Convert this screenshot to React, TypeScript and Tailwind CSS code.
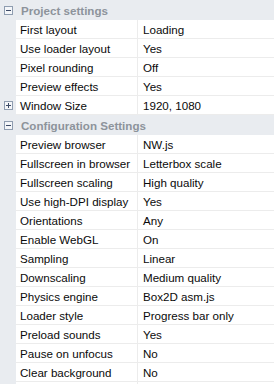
import type { ReactNode } from 'react';

type Row = { name: string; value: string; expandable?: boolean };

const projectRows: Row[] = [
  { name: 'First layout', value: 'Loading' },
  { name: 'Use loader layout', value: 'Yes' },
  { name: 'Pixel rounding', value: 'Off' },
  { name: 'Preview effects', value: 'Yes' },
  { name: 'Window Size', value: '1920, 1080', expandable: true },
];

const configRows: Row[] = [
  { name: 'Preview browser', value: 'NW.js' },
  { name: 'Fullscreen in browser', value: 'Letterbox scale' },
  { name: 'Fullscreen scaling', value: 'High quality' },
  { name: 'Use high-DPI display', value: 'Yes' },
  { name: 'Orientations', value: 'Any' },
  { name: 'Enable WebGL', value: 'On' },
  { name: 'Sampling', value: 'Linear' },
  { name: 'Downscaling', value: 'Medium quality' },
  { name: 'Physics engine', value: 'Box2D asm.js' },
  { name: 'Loader style', value: 'Progress bar only' },
  { name: 'Preload sounds', value: 'Yes' },
  { name: 'Pause on unfocus', value: 'No' },
  { name: 'Clear background', value: 'No' },
];

function ToggleBox({ open }: { open: boolean }) {
  return (
    <svg width="9" height="9" viewBox="0 0 9 9" className="block">
      <rect x="0.5" y="0.5" width="8" height="8" fill="#f4f6f9" stroke="#8f9db0" />
      <path d="M2 4.5h5" stroke="#3c4a66" />
      {!open && <path d="M4.5 2v5" stroke="#3c4a66" />}
    </svg>
  );
}

function Header({ children }: { children: ReactNode }) {
  return (
    <div className="flex h-[20px] items-center bg-[#e9ecf0]">
      <div className="flex w-[16px] shrink-0 justify-center pl-[1px]">
        <ToggleBox open />
      </div>
      <div className="pl-[5px] pt-[1px] font-bold text-[#8d939b]">{children}</div>
    </div>
  );
}

function PropRow({ row }: { row: Row }) {
  return (
    <div className="flex h-[19px]">
      <div className="flex w-[16px] shrink-0 items-center justify-center bg-[#e9ecf0] pl-[1px]">
        {row.expandable && <ToggleBox open={false} />}
      </div>
      <div className="flex w-[122px] shrink-0 items-center border-r border-b border-[#ececec] pt-[1px] pl-[4px] text-[#0a0a0a]">
        {row.name}
      </div>
      <div className="flex flex-1 items-center border-b border-[#ececec] pt-[1px] pl-[5px] text-[#0a0a0a]">
        {row.value}
      </div>
    </div>
  );
}

export default function App() {
  return (
    <div className="h-[384px] w-[274px] overflow-hidden bg-white font-['Liberation_Sans',Arial,sans-serif] text-[11.6px] leading-none">
      <Header>Project settings</Header>
      {projectRows.map((r) => (
        <PropRow key={r.name} row={r} />
      ))}
      <Header>Configuration Settings</Header>
      {configRows.map((r) => (
        <PropRow key={r.name} row={r} />
      ))}
      <div className="flex h-[19px]">
        <div className="w-[16px] shrink-0 bg-[#e9ecf0]" />
        <div className="w-[122px] shrink-0 border-r border-[#ececec]" />
        <div className="flex-1" />
      </div>
    </div>
  );
}
